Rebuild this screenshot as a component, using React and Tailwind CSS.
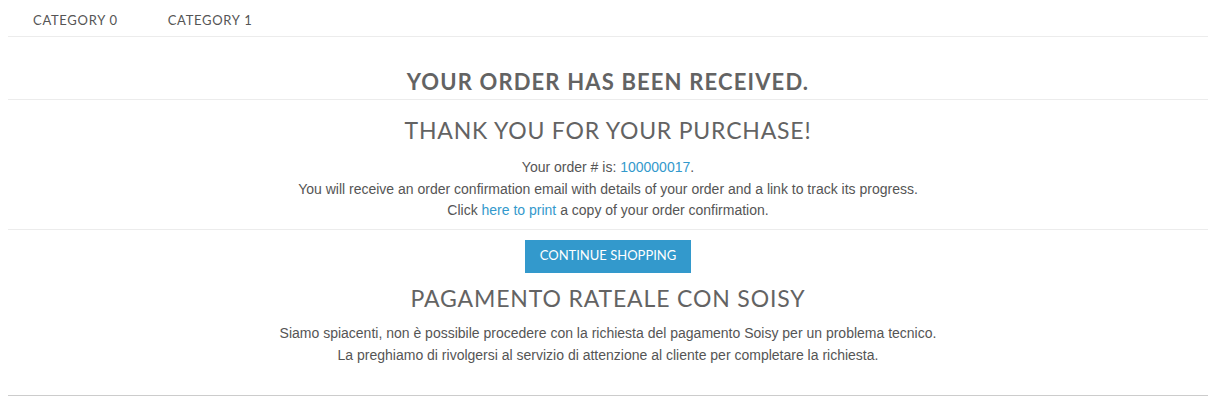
export default function App() {
  const heading = { fontFamily: "Lato, 'Open Sans', sans-serif" }
  return (
    <div className="min-h-screen bg-white px-[8px]" style={{ fontFamily: "'Liberation Sans', Arial, sans-serif" }}>
      <nav className="flex h-[37px] items-center border-b border-[#ececec] text-[13px] tracking-[0.7px] text-[#555]" style={heading}>
        <a className="px-[25px] pt-[6px]">CATEGORY 0</a>
        <a className="px-[25px] pt-[6px]">CATEGORY 1</a>
      </nav>

      <div className="border-b border-[#ececec] pt-[33px] pb-[5px] text-center">
        <h1 className="text-[22px] leading-[24px] font-bold tracking-[1.15px] text-[#636363]" style={heading}>
          YOUR ORDER HAS BEEN RECEIVED.
        </h1>
      </div>

      <div className="border-b border-[#ececec] pt-[16px] pb-[7px] text-center">
        <h2 className="text-[23px] leading-[28px] tracking-[0.8px] text-[#636363]" style={heading}>
          THANK YOU FOR YOUR PURCHASE!
        </h2>
        <div className="mt-[13px] text-[14px] leading-[21.5px] text-[#555]">
          <p>Your order # is: <a className="text-[#3399cc]">100000017</a>.</p>
          <p>You will receive an order confirmation email with details of your order and a link to track its progress.</p>
          <p>Click <a className="text-[#3399cc]">here to print</a> a copy of your order confirmation.</p>
        </div>
      </div>

      <div className="border-b border-[#cccccc] pt-[10px] pb-[29px] text-center">
        <button className="h-[33px] w-[166px] bg-[#3399cc] text-[13px] text-white" style={heading}>
          CONTINUE SHOPPING
        </button>
        <h2 className="mt-[11px] text-[23px] leading-[28px] tracking-[0.85px] text-[#636363]" style={heading}>
          PAGAMENTO RATEALE CON SOISY
        </h2>
        <div className="mt-[10px] text-[14px] leading-[22px] text-[#555]">
          <p>Siamo spiacenti, non è possibile procedere con la richiesta del pagamento Soisy per un problema tecnico.</p>
          <p>La preghiamo di rivolgersi al servizio di attenzione al cliente per completare la richiesta.</p>
        </div>
      </div>
    </div>
  )
}
